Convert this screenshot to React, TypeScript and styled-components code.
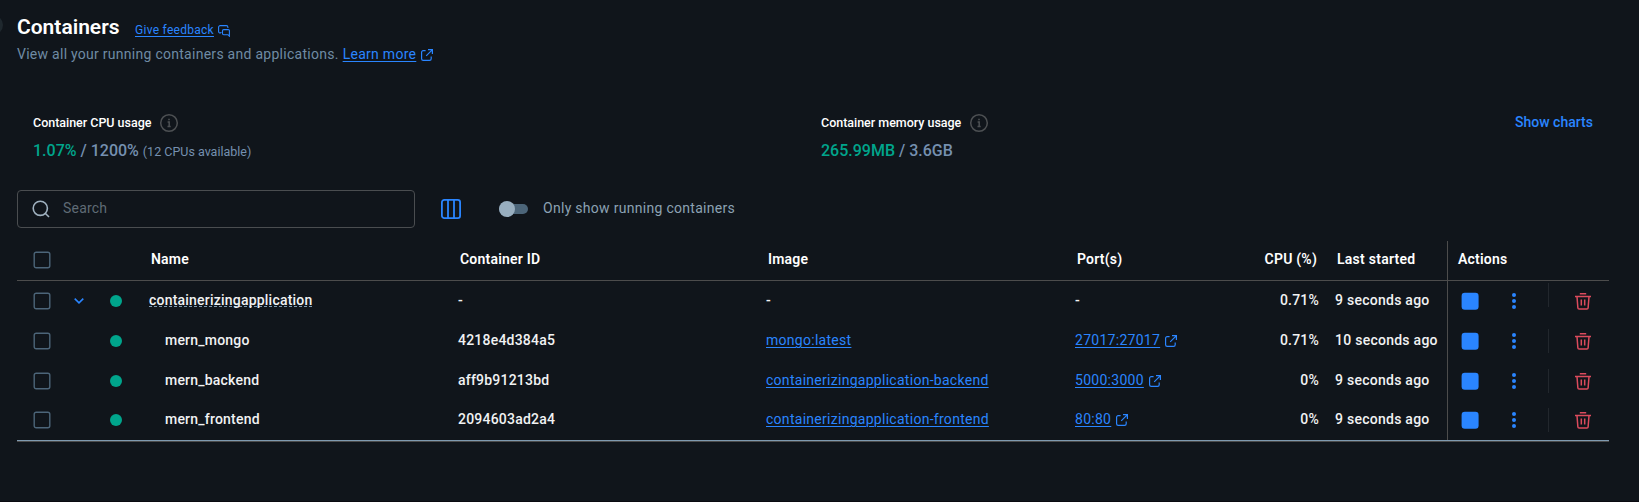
import React from "react";
import styled, { createGlobalStyle } from "styled-components";

const GlobalStyle = createGlobalStyle`
  * { box-sizing: border-box; }
  body {
    margin: 0;
    background: #10151b;
    color: #fff;
    font-family: Roboto, "Liberation Sans", sans-serif;
    font-size: 14px;
    overflow: hidden;
  }
  svg { display: block; flex: none; }
`;

const Page = styled.main`
  position: relative;
  height: 502px;
  padding: 14px 30px 0 17px;
  border-bottom: 1px solid #0a0a10;
`;

const Knob = styled.div`
  position: absolute;
  left: -17px;
  top: 15px;
  width: 20px;
  height: 20px;
  border-radius: 50%;
  background: #1f282e;
`;

const TitleRow = styled.header`
  display: flex;
  align-items: flex-start;
  height: 28px;
`;

const Title = styled.h1`
  margin: 0;
  width: 118px;
  font-size: 21px;
  font-weight: 600;
  line-height: 26px;
`;

const Link = styled.a<{ $size?: number }>`
  color: #2a85ff;
  font-size: ${(p) => p.$size ?? 14}px;
  font-weight: 400;
  letter-spacing: 0.28px;
  text-decoration: underline;
  text-underline-offset: 2px;
  text-decoration-thickness: 1px;
`;

const Feedback = styled.div`
  display: flex;
  align-items: center;
  gap: 4px;
  height: 32px;
  svg { margin-top: 1px; }
`;

const Intro = styled.p`
  display: flex;
  align-items: center;
  margin: 0;
  height: 24px;
  color: #6f8ba4;
  letter-spacing: 0.27px;
  gap: 4px;
  svg { margin: 2px 0 0 1px; }
`;

const Stats = styled.section`
  display: flex;
  align-items: flex-start;
  height: 124px;
  padding: 45px 16px 0;
`;

const Stat = styled.div`
  width: 788px;
  flex: none;
  &:nth-child(2) { width: 694px; }
`;

const StatLabel = styled.div`
  display: flex;
  align-items: center;
  gap: 8px;
  height: 22px;
  font-size: 12.5px;
  font-weight: 500;
  letter-spacing: -0.02px;
  svg { margin-top: 2px; }
`;

const StatValue = styled.div`
  display: flex;
  align-items: baseline;
  height: 24px;
  margin-top: 6px;
  color: #7590b0;
  font-size: 16px;
  font-weight: 500;
  line-height: 24px;
  white-space: pre;
`;

const Used = styled.span`
  color: #00a58c;
`;

const Note = styled.span`
  font-size: 12.5px;
  font-weight: 400;
`;

const ChartsButton = styled.button`
  padding: 0;
  border: 0;
  background: none;
  color: #2a85ff;
  font: 500 14px/22px Roboto, sans-serif;
`;

const Toolbar = styled.div`
  display: flex;
  align-items: center;
  height: 38px;
`;

const SearchField = styled.label`
  display: flex;
  align-items: center;
  width: 398px;
  height: 38px;
  padding-left: 14px;
  gap: 13px;
  border: 1px solid #4a4d50;
  border-radius: 4px;
`;

const Placeholder = styled.span`
  padding-bottom: 2px;
  color: #5f6b75;
  letter-spacing: 0.2px;
`;

const ColumnsButton = styled.button`
  margin: 0 38px 0 26px;
  padding: 0;
  border: 0;
  background: none;
`;

const Toggle = styled.span`
  display: flex;
  align-items: center;
  width: 29px;
  height: 10px;
  margin-right: 15px;
  border-radius: 5px;
  background: #4c6579;
  &::before {
    content: "";
    width: 16px;
    height: 16px;
    flex: none;
    border-radius: 50%;
    background: #98aebf;
  }
`;

const ToggleLabel = styled.span`
  padding-bottom: 2px;
  color: #8ca2b3;
  letter-spacing: 0.29px;
`;

const Table = styled.div`
  margin-top: 13px;
  border-bottom: 1px solid #4c4c4c;
`;

const Row = styled.div<{ $head?: boolean; $last?: boolean }>`
  display: grid;
  grid-template-columns: 34px 56px 42px 309px 308px 309px 244px 128px 1fr;
  height: 40px;
  font-weight: ${(p) => (p.$head ? 600 : 500)};
  letter-spacing: 0.21px;
  color: ${(p) => (p.$head ? "#fff" : "#f1f2f3")};
  border-bottom: ${(p) => (p.$head ? "1px solid #4c4c4c" : p.$last ? "1px solid #7f9ab0" : "0")};
`;

const Cell = styled.div<{ $indent?: number; $lift?: number }>`
  display: flex;
  align-items: center;
  min-width: 0;
  padding-left: ${(p) => p.$indent ?? 0}px;
  padding-bottom: ${(p) => p.$lift ?? 3}px;
  white-space: nowrap;
`;

const PortCell = styled(Cell)`
  justify-content: space-between;
`;

const PortLink = styled.span`
  display: flex;
  align-items: center;
  gap: 5px;
  svg { margin-top: 2px; }
`;

const Cpu = styled.span<{ $inset?: number }>`
  margin-right: ${(p) => p.$inset ?? 0}px;
`;

const StartedCell = styled(Cell)`
  letter-spacing: 0.26px;
`;

const ActionsCell = styled(Cell)`
  border-left: 1px solid #4c4c4c;
`;

const StatusDot = styled.span`
  width: 12px;
  height: 12px;
  margin-left: 3px;
  border-radius: 50%;
  background: #00a58c;
`;

const GroupName = styled.span`
  padding-top: 1px;
  line-height: 12px;
  border-bottom: 1px dashed #7f9ab0;
`;

const Dots = styled.span`
  display: grid;
  gap: 2px;
  margin: 0 32px 0 33px;
  i {
    width: 4px;
    height: 4px;
    border-radius: 50%;
    background: #2a85ff;
  }
`;

const Divider = styled.span<{ $raise?: boolean }>`
  width: 1px;
  height: 24px;
  margin-right: 26px;
  margin-top: ${(p) => (p.$raise ? -12 : 0)}px;
  background: #22272d;
`;

const CheckboxCell = styled(Cell)`
  padding-left: 16px;
`;

const StopButton = styled.button`
  margin: 0 0 0 13px;
  padding: 0;
  border: 0;
  background: none;
`;

const StopIcon = () => (
  <svg width="18" height="18" viewBox="0 0 18 18" fill="#2a85ff">
    <rect x=".6" y=".7" width="17" height="17" rx="3.2" />
  </svg>
);

const Checkbox = () => (
  <svg width="18" height="18" viewBox="0 0 18 18" fill="none" stroke="#4c6579" strokeWidth="1.4">
    <rect x="1.2" y="1.2" width="15.6" height="15.6" rx="2" />
  </svg>
);

const ExternalIcon = () => (
  <svg width="12" height="12" viewBox="0 0 12 12" fill="none" stroke="#2a85ff" strokeWidth="1.2">
    <path d="M4.6 1.6H2.2A1.6 1.6 0 0 0 .6 3.2v6.6a1.6 1.6 0 0 0 1.6 1.6h6.4a1.6 1.6 0 0 0 1.6-1.6V7.4M7 .6h4.4V5M11.2.8 5.2 6.8" />
  </svg>
);

const FeedbackIcon = () => (
  <svg width="12" height="12" viewBox="0 0 12 12" fill="none" stroke="#2a85ff" strokeWidth="1.1">
    <path d="M2.9 8H2.2A1.6 1.6 0 0 1 .6 6.4V2.2A1.6 1.6 0 0 1 2.2.6h6.1a1.6 1.6 0 0 1 1.6 1.6v.9M2.9 8v-1M5.7 4.6h4.5a1.2 1.2 0 0 1 1.2 1.2v5.4L9.9 9.7H5.7a1.2 1.2 0 0 1-1.2-1.2V5.8a1.2 1.2 0 0 1 1.2-1.2Z" />
  </svg>
);

const InfoIcon = () => (
  <svg width="20" height="20" viewBox="0 0 20 20" fill="none" stroke="#4d5053" strokeWidth="1.5">
    <circle cx="10" cy="10" r="8.3" />
    <path d="M8.6 9h1.6v4.3M8.5 13.6h3.2M9.2 6.4h1.6" strokeWidth="1.5" />
  </svg>
);

const SearchIcon = () => (
  <svg width="18" height="18" viewBox="0 0 18 18" fill="none" stroke="#a0b2c0" strokeWidth="1.6">
    <circle cx="8.3" cy="8.3" r="7.1" />
    <path d="m13.2 13.2 3.8 3.8" />
  </svg>
);

const ColumnsIcon = () => (
  <svg width="20" height="20" viewBox="0 0 20 20" fill="none" stroke="#2a85ff" strokeWidth="1.8">
    <rect x=".9" y=".9" width="18.2" height="18.2" rx="2.4" />
    <path d="M7 1v18M13 1v18" />
  </svg>
);

const ChevronIcon = () => (
  <svg width="10" height="6" viewBox="0 0 10 6" fill="none" stroke="#2a85ff" strokeWidth="1.6">
    <path d="m.7.7 4.3 4.1L9.3.7" />
  </svg>
);

const TrashIcon = () => (
  <svg width="16" height="17" viewBox="0 0 16 17" fill="none" stroke="#dc4b5d" strokeWidth="1.5">
    <path d="M4.8.8h6.4M0 3.4h16M2 3.8l.9 11.2a1.2 1.2 0 0 0 1.2 1.1h7.8a1.2 1.2 0 0 0 1.2-1.1L14 3.8M6.3 6.6v6M9.7 6.6v6" />
  </svg>
);

type Item = {
  name: string;
  id: string;
  image: string;
  port: string;
  cpu: string;
  started: string;
  group?: boolean;
};

const items: Item[] = [
  { name: "containerizingapplication", id: "-", image: "-", port: "-", cpu: "0.71%", started: "9 seconds ago", group: true },
  { name: "mern_mongo", id: "4218e4d384a5", image: "mongo:latest", port: "27017:27017", cpu: "0.71%", started: "10 seconds ago" },
  { name: "mern_backend", id: "aff9b91213bd", image: "containerizingapplication-backend", port: "5000:3000", cpu: "0%", started: "9 seconds ago" },
  { name: "mern_frontend", id: "2094603ad2a4", image: "containerizingapplication-frontend", port: "80:80", cpu: "0%", started: "9 seconds ago" },
];

const ContainerRow = ({ item, last }: { item: Item; last: boolean }) => {
  const textLift = last ? 3 : 2;
  const iconLift = last ? 1 : 0;
  return (
    <Row $last={last}>
      <CheckboxCell $lift={iconLift}><Checkbox /></CheckboxCell>
      <Cell $lift={iconLift} $indent={23}>{item.group && <ChevronIcon />}</Cell>
      <Cell $lift={iconLift}><StatusDot /></Cell>
      <Cell $lift={textLift} $indent={item.group ? 0 : 16}>
        {item.group ? <GroupName>{item.name}</GroupName> : item.name}
      </Cell>
      <Cell $lift={textLift}>{item.id}</Cell>
      <Cell $lift={textLift}>{item.group ? item.image : <Link>{item.image}</Link>}</Cell>
      <PortCell $lift={textLift}>
        {item.group ? <span>{item.port}</span> : <PortLink><Link>{item.port}</Link><ExternalIcon /></PortLink>}
        <Cpu>{item.cpu}</Cpu>
      </PortCell>
      <StartedCell $lift={textLift} $indent={16}>{item.started}</StartedCell>
      <ActionsCell $lift={iconLift}>
        <StopButton><StopIcon /></StopButton>
        <Dots><i /><i /><i /></Dots>
        <Divider $raise={item.group} />
        <TrashIcon />
      </ActionsCell>
    </Row>
  );
};

export default function App() {
  return (
    <>
      <GlobalStyle />
      <Page>
        <Knob />
        <TitleRow>
          <Title>Containers</Title>
          <Feedback><Link $size={12}>Give feedback</Link><FeedbackIcon /></Feedback>
        </TitleRow>
        <Intro>
          View all your running containers and applications.
          <Link>Learn more</Link>
          <ExternalIcon />
        </Intro>
        <Stats>
          <Stat>
            <StatLabel>Container CPU usage <InfoIcon /></StatLabel>
            <StatValue><Used>1.07%</Used> / 1200% <Note>(12 CPUs available)</Note></StatValue>
          </Stat>
          <Stat>
            <StatLabel>Container memory usage <InfoIcon /></StatLabel>
            <StatValue><Used>265.99MB</Used> / 3.6GB</StatValue>
          </Stat>
          <ChartsButton>Show charts</ChartsButton>
        </Stats>
        <Toolbar>
          <SearchField><SearchIcon /><Placeholder>Search</Placeholder></SearchField>
          <ColumnsButton><ColumnsIcon /></ColumnsButton>
          <Toggle />
          <ToggleLabel>Only show running containers</ToggleLabel>
        </Toolbar>
        <Table>
          <Row $head>
            <CheckboxCell $lift={1}><Checkbox /></CheckboxCell>
            <Cell />
            <Cell />
            <Cell $indent={2}>Name</Cell>
            <Cell $indent={2}>Container ID</Cell>
            <Cell $indent={2}>Image</Cell>
            <PortCell $indent={2}><span>Port(s)</span><Cpu $inset={2}>CPU (%)</Cpu></PortCell>
            <StartedCell $indent={18}>Last started</StartedCell>
            <ActionsCell $indent={10}>Actions</ActionsCell>
          </Row>
          {items.map((item, i) => (
            <ContainerRow key={item.name} item={item} last={i === items.length - 1} />
          ))}
        </Table>
      </Page>
    </>
  );
}
